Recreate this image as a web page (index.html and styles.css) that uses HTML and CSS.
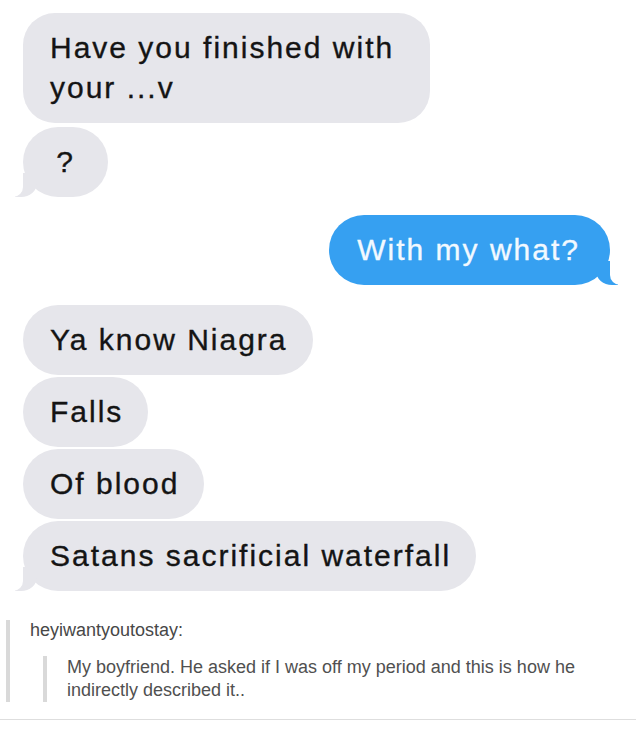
FILE: index.html
```html
<!DOCTYPE html>
<html lang="en">
<head>
<meta charset="utf-8">
<title>Conversation</title>
<link rel="stylesheet" href="styles.css">
</head>
<body>
<main class="page">
  <section class="thread">
    <div class="bubble them wide">Have you finished with<br>your ...v</div>
    <div class="bubble them single tail-left">?</div>
    <div class="bubble me tail-right">With my what?</div>
    <div class="group">
      <div class="bubble them">Ya know Niagra</div>
      <div class="bubble them">Falls</div>
      <div class="bubble them">Of blood</div>
      <div class="bubble them tail-left">Satans sacrificial waterfall</div>
    </div>
  </section>
  <section class="caption">
    <blockquote class="quote">
      <p class="user">heyiwantyoutostay:</p>
      <blockquote class="inner">
        <p>My boyfriend. He asked if I was off my period and this is how he indirectly described it..</p>
      </blockquote>
    </blockquote>
    <hr class="rule">
  </section>
</main>
</body>
</html>
```
FILE: styles.css
```css
html, body {
  margin: 0;
  padding: 0;
  background: #ffffff;
}

.page {
  width: 640px;
  font-family: "Liberation Sans", Arial, sans-serif;
}

.thread {
  display: flex;
  flex-direction: column;
  align-items: flex-start;
  padding: 13px 0 0 23px;
  gap: 4px;
}

.group {
  display: flex;
  flex-direction: column;
  align-items: flex-start;
  gap: 2px;
  margin-top: 16px;
}

.bubble {
  position: relative;
  box-sizing: border-box;
  padding: 15px 25px 15px 27px;
  font-size: 30px;
  line-height: 40px;
  letter-spacing: 2px;
  -webkit-text-stroke: 0.35px currentColor;
  border-radius: 35px;
  white-space: nowrap;
}

.them {
  background: #e6e6eb;
  color: #141414;
}

.wide {
  width: 407px;
  border-radius: 32px;
}

.single {
  min-width: 85px;
  text-align: center;
  padding-left: 20px;
  padding-right: 20px;
}

.me {
  align-self: flex-end;
  margin-right: 30px;
  margin-top: 14px;
  background: #36a0f1;
  color: #f2f9ff;
  padding: 15px 30px 15px 28px;
}

.tail-left::before {
  content: "";
  position: absolute;
  bottom: 0;
  left: -8px;
  width: 22px;
  height: 24px;
  background: #e6e6eb;
  border-bottom-right-radius: 16px 14px;
}

.tail-left::after {
  content: "";
  position: absolute;
  bottom: 0;
  left: -26px;
  width: 26px;
  height: 24px;
  background: #ffffff;
  border-bottom-right-radius: 10px;
}

.tail-right::before {
  content: "";
  position: absolute;
  bottom: 0;
  right: -8px;
  width: 22px;
  height: 24px;
  background: #36a0f1;
  border-bottom-left-radius: 16px 14px;
}

.tail-right::after {
  content: "";
  position: absolute;
  bottom: 0;
  right: -26px;
  width: 26px;
  height: 24px;
  background: #ffffff;
  border-bottom-left-radius: 10px;
}

.caption {
  width: 636px;
  padding-top: 29px;
}

.quote {
  margin: 0 0 0 6px;
  padding: 0 0 0 20px;
  border-left: 4px solid #d9d9d9;
  font-size: 18px;
  color: #474747;
}

.user {
  margin: 0;
  line-height: 20px;
}

.inner {
  margin: 16px 0 0 13px;
  padding: 0 0 0 20px;
  border-left: 4px solid #d9d9d9;
  width: 520px;
}

.inner p {
  margin: 0;
  line-height: 23px;
  color: #505050;
}

.rule {
  margin: 17px 0 0 0;
  border: 0;
  height: 1px;
  background: #dedede;
}
```
